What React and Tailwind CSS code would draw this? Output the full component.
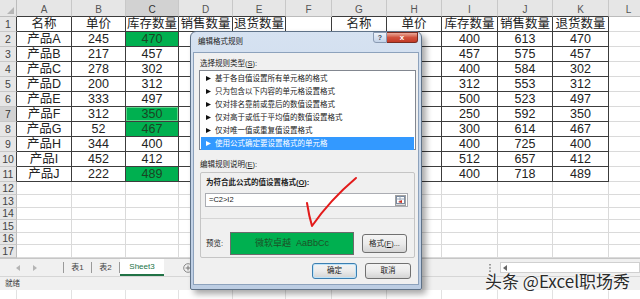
import React from 'react'

const font = "font-['Liberation_Sans','Noto_Sans_CJK_SC',sans-serif]"

const cols = [
  { k: 'A', w: 'w-[55px]' },
  { k: 'B', w: 'w-[54px]' },
  { k: 'C', w: 'w-[53px]' },
  { k: 'D', w: 'w-[54px]' },
  { k: 'E', w: 'w-[53px]' },
  { k: 'F', w: 'w-[46px]' },
  { k: 'G', w: 'w-[55px]' },
  { k: 'H', w: 'w-[55px]' },
  { k: 'I', w: 'w-[56px]' },
  { k: 'J', w: 'w-[55px]' },
  { k: 'K', w: 'w-[56px]' },
  { k: 'L', w: 'w-[40px]' },
]
const tbl = new Set(['A', 'B', 'C', 'D', 'E', 'G', 'H', 'I', 'J', 'K'])

const names = ['产品A', '产品B', '产品C', '产品D', '产品E', '产品F', '产品G', '产品H', '产品I', '产品J']
const price = [245, 217, 278, 200, 333, 312, 52, 344, 452, 222]
const stock = [470, 457, 302, 312, 497, 350, 467, 400, 412, 489]
const stock2 = [400, 457, 400, 312, 500, 250, 300, 400, 512, 400]
const sales = [613, 575, 584, 553, 523, 592, 614, 725, 657, 718]
const back = [470, 457, 302, 312, 497, 350, 467, 400, 412, 489]

// D, E, G, H of rows 2-11 sit under the dialog, so they stay empty
const rows = [
  {
    n: 1,
    h: 'h-[15px]',
    v: { A: '名称', B: '单价', C: '库存数量', D: '销售数量', E: '退货数量', G: '名称', H: '单价', I: '库存数量', J: '销售数量', K: '退货数量' },
  },
  ...names.map((name, i) => ({
    n: i + 2,
    h: 'h-[15px]',
    green: stock[i] > stock2[i],
    v: { A: name, B: price[i], C: stock[i], I: stock2[i], J: sales[i], K: back[i] },
  })),
  { n: 12, h: 'h-[13px]', v: {} },
  { n: 13, h: 'h-[13px]', v: {} },
  { n: 14, h: 'h-[12px]', v: {} },
  { n: 15, h: 'h-[13px]', v: {} },
  { n: 16, h: 'h-[12px]', v: {} },
  { n: 17, h: 'h-[13px]', v: {} },
]

const rules = [
  '基于各自值设置所有单元格的格式',
  '只为包含以下内容的单元格设置格式',
  '仅对排名靠前或靠后的数值设置格式',
  '仅对高于或低于平均值的数值设置格式',
  '仅对唯一值或重复值设置格式',
  '使用公式确定要设置格式的单元格',
]

function Tri({ left, color = '#b4b4b4' }) {
  return (
    <svg width="4" height="6" viewBox="0 0 4 6">
      <polygon points={left ? '4,0 0,3 4,6' : '0,0 4,3 0,6'} fill={color} />
    </svg>
  )
}

function HeaderRow() {
  return (
    <div className="flex h-[17px] bg-[#e6e6e6]">
      <div className="w-[17px] shrink-0 flex items-end justify-end p-[2px] border-r border-b border-[#bcbcbc]">
        <svg width="7" height="7" viewBox="0 0 7 7">
          <polygon points="7,0 7,7 0,7" fill="#b5b5b5" />
        </svg>
      </div>
      {cols.map((c) => (
        <div
          key={c.k}
          className={`${c.w} shrink-0 flex items-center justify-center pt-[3px] text-[10px] leading-none border-r border-b border-r-[#c8c8c8] ${
            tbl.has(c.k) ? 'border-b-[#3c3c3c]' : 'border-b-[#bcbcbc]'
          } ${c.k === 'C' ? 'bg-[#d2d2d2] text-[#333]' : 'text-[#555]'}`}
        >
          {c.k}
        </div>
      ))}
    </div>
  )
}

function GridRow({ row }) {
  const t = row.n <= 11
  return (
    <div className={`flex ${row.h}`}>
      <div
        className={`w-[17px] shrink-0 flex items-center justify-center text-[10.5px] leading-none border-r border-b border-b-[#c8c8c8] ${
          t ? 'border-r-[#3c3c3c]' : 'border-r-[#bcbcbc]'
        } ${row.n === 7 ? 'bg-[#d2d2d2] text-[#333]' : 'bg-[#e6e6e6] text-[#444]'}`}
      >
        {row.n}
      </div>
      {cols.map((c) => {
        const inT = t && tbl.has(c.k)
        const edge = inT || (t && c.k === 'F')
        const g = row.green && c.k === 'C'
        return (
          <div
            key={c.k}
            className={`${c.w} shrink-0 flex items-center justify-center text-[12.5px] leading-none border-r border-b ${
              edge ? 'border-r-[#3c3c3c]' : 'border-r-[#dadada]'
            } ${inT ? 'border-b-[#3c3c3c]' : 'border-b-[#dadada]'} ${
              g ? 'bg-[#00b050] text-[#1a4423]' : 'text-[#222]'
            } ${row.n === 7 && c.k === 'C' ? 'shadow-[inset_0_0_0_1px_#5cd68a]' : ''}`}
          >
            {row.v[c.k]}
          </div>
        )
      })}
    </div>
  )
}

function TabBar() {
  return (
    <div className="h-[18px] flex items-stretch bg-[#f0f0f0] border-t border-[#c6c6c6] text-[8px] leading-none text-[#444]">
      <div className="w-[63px] flex items-center gap-[13px] pl-[16px]">
        <Tri left />
        <Tri />
      </div>
      <div className="w-px my-[3px] bg-[#9a9a9a]" />
      <div className="w-[27px] flex items-center justify-center">表1</div>
      <div className="w-px my-[3px] bg-[#9a9a9a]" />
      <div className="w-[27px] flex items-center justify-center">表2</div>
      <div className="w-px my-[3px] bg-[#9a9a9a]" />
      <div className="w-[44px] bg-white flex items-center justify-center text-[#217346] border-b-2 border-[#217346]">
        Sheet3
      </div>
      <div className="ml-[19px] flex items-center">
        <svg width="10" height="10" viewBox="0 0 10 10">
          <circle cx="5" cy="5" r="4.3" fill="none" stroke="#888" />
          <path d="M5 2.6V7.4M2.6 5H7.4" stroke="#777" />
        </svg>
      </div>
      <div className="ml-auto flex items-center">
        <svg width="2" height="8" viewBox="0 0 2 8" className="mr-[9px]">
          <rect x="0" y="0" width="2" height="1.5" fill="#999" />
          <rect x="0" y="3.2" width="2" height="1.5" fill="#999" />
          <rect x="0" y="6.4" width="2" height="1.5" fill="#999" />
        </svg>
        <div className="w-[140px] h-[11px] bg-white border border-[#d0d0d0] flex items-center pl-[2px]">
          <Tri left color="#666" />
        </div>
      </div>
    </div>
  )
}

function BlankRow() {
  return (
    <div className="flex h-[9px] bg-white">
      <div className="w-[17px] shrink-0 border-r border-[#e2e2e2]" />
      {cols.map((c) => (
        <div key={c.k} className={`${c.w} shrink-0 border-r border-[#e2e2e2]`} />
      ))}
    </div>
  )
}

function Button({ children, primary }) {
  return (
    <div
      className={`h-[16px] flex items-center justify-center rounded-[3px] border bg-gradient-to-b from-[#f4f4f4] via-[#ebebeb] to-[#d4d4d4] ${
        primary ? 'w-[45px] border-[#3c7fb1] shadow-[inset_0_0_0_1px_#bfe3f8]' : 'w-[46px] border-[#707070]'
      }`}
    >
      {children}
    </div>
  )
}

function Dialog() {
  return (
    <div className="absolute left-[190px] top-[31px] w-[232px] h-[259px] flex flex-col rounded-t-[6px] rounded-b-[2px] border border-[#5f7288] bg-gradient-to-b from-[#d6e2f1] to-[#bccde3] px-[2px] pb-[4px] shadow-[4px_4px_6px_rgba(0,0,0,0.35)] text-[7.5px] leading-none text-[#1a1a1a]">
      <div className="h-[20px] shrink-0 flex items-start">
        <span className="mt-[6px] ml-[5px]">编辑格式规则</span>
        <div className="ml-auto mr-[1px] flex">
          <div className="w-[14px] h-[11px] flex items-center justify-center rounded-bl-[3px] border border-[#8a9bb3] bg-gradient-to-b from-[#eef3fa] to-[#c4d3e8] text-[7px] font-bold text-[#3a4a60]">
            ?
          </div>
          <div className="w-[31px] h-[11px] flex items-center justify-center rounded-br-[3px] border border-l-0 border-[#7a2b20] bg-gradient-to-b from-[#e9a99a] via-[#d0513d] to-[#c23a26] text-[8px] font-bold text-white">
            x
          </div>
        </div>
      </div>
      <div className="flex-1 bg-[#f0f0f0] border border-[#8da2bc] pl-[5px] pr-[2px] flex flex-col">
        <div className="h-[10px] mt-[6px] ml-[1px] flex items-center">
          选择规则类型(<span className="underline">S</span>):
        </div>
        <div className="h-[80px] mt-[1px] bg-white border border-[#828790] px-[1px] pt-[1px] flex flex-col">
          {rules.map((r, i) => (
            <div
              key={r}
              className={`h-[13px] shrink-0 flex items-center ${i === 5 ? 'bg-[#3399ff] text-white' : ''}`}
            >
              <svg width="5" height="5" viewBox="0 0 5 5" className="ml-[5px]">
                <polygon points="0,0 5,2.5 0,5" fill={i === 5 ? '#ffffff' : '#111111'} />
              </svg>
              <span className="ml-[4px]">{r}</span>
            </div>
          ))}
        </div>
        <div className="h-[10px] mt-[10px] ml-[1px] flex items-center">
          编辑规则说明(<span className="underline">E</span>):
        </div>
        <div className="h-[86px] mt-[2px] mx-[1px] border border-[#c5c5c5] rounded-[2px] flex flex-col">
          <div className="h-[10px] mt-[5px] ml-[5px] flex items-center font-bold">
            为符合此公式的值设置格式(<span className="underline">O</span>):
          </div>
          <div className="h-[14px] mt-[5px] ml-[4px] w-[203px] bg-white border border-[#abadb3] flex items-center">
            <span className="ml-[3px]">=C2&gt;I2</span>
            <div className="ml-auto mr-px w-[11px] h-[11px] border border-[#a0a0a0] bg-gradient-to-b from-[#fafafa] to-[#dcdcdc] flex items-center justify-center">
              <svg width="9" height="8" viewBox="0 0 9 8">
                <rect x="0.5" y="0.5" width="8" height="7" fill="#fff" stroke="#7a8aa0" />
                <line x1="0.5" y1="3" x2="8.5" y2="3" stroke="#9aa8ba" />
                <line x1="4" y1="0.5" x2="4" y2="7.5" stroke="#9aa8ba" />
                <polygon points="2,6 6,4 6,7" fill="#d03020" />
              </svg>
            </div>
          </div>
          <div className="h-px mt-[11px] bg-[#d5d5d5]" />
          <div className="h-[23px] mt-[13px] flex items-center">
            <span className="ml-[5px] w-[24px]">预览:</span>
            <div className="w-[124px] h-[23px] bg-[#00b050] border border-[#6b6b6b] flex items-center justify-center text-[9px] text-[#1d5127]">
              微软卓越&nbsp;&nbsp;AaBbCc
            </div>
            <div className="ml-[8px] w-[45px] h-[19px] flex items-center justify-center rounded-[3px] border border-[#707070] bg-gradient-to-b from-[#f4f4f4] via-[#ebebeb] to-[#d4d4d4]">
              格式(<span className="underline">F</span>)...
            </div>
          </div>
        </div>
        <div className="h-[16px] mt-[5px] mr-[5px] flex justify-end gap-[8px]">
          <Button primary>确定</Button>
          <Button>取消</Button>
        </div>
      </div>
    </div>
  )
}

export default function App() {
  return (
    <div className={`relative w-[640px] h-[299px] overflow-hidden bg-white ${font}`}>
      <HeaderRow />
      {rows.map((r) => (
        <GridRow key={r.n} row={r} />
      ))}
      <TabBar />
      <div className="h-[14px] bg-[#f0f0f0] border-t border-[#d6d6d6] flex items-center pl-[5px] text-[7.5px] leading-none text-[#444]">
        就绪
      </div>
      <BlankRow />
      <Dialog />
      <svg className="absolute left-[300px] top-[172px]" width="62" height="58" viewBox="0 0 62 58">
        <path d="M7 31 Q9 44 12 54 Q30 28 56 6" fill="none" stroke="#e31b1b" strokeWidth="2" strokeLinecap="round" strokeLinejoin="round" />
      </svg>
      <div className="absolute left-[485px] top-[272px] text-[17px] leading-none text-[#2b2b2b] font-['Noto_Sans_CJK_SC',sans-serif] [text-shadow:0_0_2px_#fff,0_0_2px_#fff]">
        头条 @Excel职场秀
      </div>
    </div>
  )
}
